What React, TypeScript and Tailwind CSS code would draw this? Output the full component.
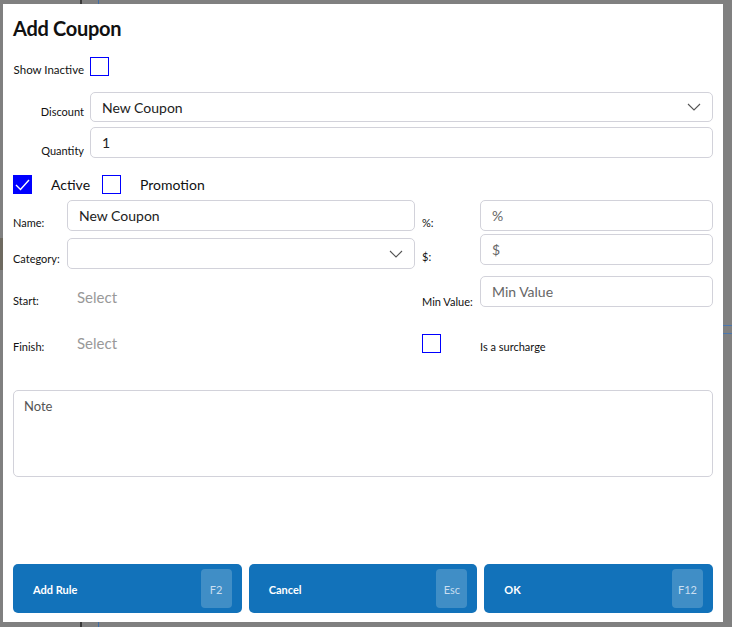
import { useState } from "react";

const font = { fontFamily: '"Lato", "Noto Sans", sans-serif' };

const Chevron = () => (
  <svg width="14" height="8" viewBox="0 0 14 8" className="shrink-0">
    <path d="M1 1l6 6 6-6" fill="none" stroke="#555" strokeWidth="1.1" />
  </svg>
);

const Check = ({ checked, onClick }: { checked: boolean; onClick?: () => void }) => (
  <div
    onClick={onClick}
    className={`w-[19px] h-[19px] shrink-0 border border-[#0000ff] flex items-center justify-center ${
      checked ? "bg-[#0000ff]" : "bg-white"
    }`}
  >
    {checked && (
      <svg width="17" height="17" viewBox="0 0 17 17">
        <path d="M2 9l4.5 4.5L15 4" fill="none" stroke="white" strokeWidth="1.4" />
      </svg>
    )}
  </div>
);

const Box = ({
  text,
  placeholder,
  select,
  className,
}: {
  text?: string;
  placeholder?: string;
  select?: boolean;
  className?: string;
}) => (
  <div
    className={`flex items-center justify-between border border-[#d2d2da] rounded-[5px] px-[11px] bg-white ${className}`}
  >
    <span className={`text-[14px] ${text ? "text-[#222]" : "text-[#666]"}`}>{text ?? placeholder}</span>
    {select && <Chevron />}
  </div>
);

const KeyButton = ({ label, hotkey }: { label: string; hotkey: string }) => (
  <button className="flex-1 h-[49px] rounded-[5px] bg-[#1272ba] flex items-center justify-between pl-[20px] pr-[10px]">
    <span className="text-white font-bold text-[11px] mt-[3px]">{label}</span>
    <span className="w-[31px] h-[39px] rounded-[4px] bg-[#408ec6] text-[#c9def0] text-[11px] flex items-center justify-center pt-[3px]">
      {hotkey}
    </span>
  </button>
);

export default function App() {
  const [showInactive, setShowInactive] = useState(false);
  const [active, setActive] = useState(true);
  const [promotion, setPromotion] = useState(false);
  const [surcharge, setSurcharge] = useState(false);

  return (
    <div className="relative w-[732px] h-[627px] bg-[#808080] pt-[4px] pl-[3px] overflow-hidden" style={font}>
      {/* bits of the page behind the overlay */}
      <div className="absolute left-[80px] top-0 w-[2px] h-full bg-[#3a3a3a]" />
      <div className="absolute left-[98px] top-0 w-[1px] h-full bg-[#3f6ea8]" />
      <div className="absolute left-0 top-[238px] w-[3px] h-[32px] bg-[#6e6a60]" />
      <div className="absolute left-[723px] top-[325px] w-[9px] h-[1px] bg-[#4a78b0]" />
      <div className="absolute left-[723px] top-[333px] w-[9px] h-[1px] bg-[#4a78b0]" />

      <div className="relative w-[720px] h-[618px] bg-white flex flex-col pl-[10px] pr-[10px] pt-[10px] pb-[9px] text-[#111]">
        <h1 className="text-[20px] leading-[28px] font-bold tracking-[-0.3px]">Add Coupon</h1>

        <div className="flex items-end gap-[6px] mt-[15px]">
          <span className="w-[71px] text-right text-[11.5px] leading-[14px] mb-[-1px] whitespace-nowrap">Show Inactive</span>
          <Check checked={showInactive} onClick={() => setShowInactive(!showInactive)} />
        </div>

        <div className="flex gap-[6px] mt-[16px]">
          <span className="w-[71px] text-right text-[11px] self-end mb-[2px]">Discount</span>
          <Box text="New Coupon" select className="flex-1 h-[30px]" />
        </div>

        <div className="flex gap-[6px] mt-[5px]">
          <span className="w-[71px] text-right text-[11px] self-end mb-[-1px]">Quantity</span>
          <Box text="1" className="flex-1 h-[31px]" />
        </div>

        <div className="flex items-center h-[19px] mt-[17px]">
          <Check checked={active} onClick={() => setActive(!active)} />
          <span className="ml-[19px] w-[51px] text-[14px] leading-[19px]">Active</span>
          <Check checked={promotion} onClick={() => setPromotion(!promotion)} />
          <span className="ml-[19px] text-[14px] leading-[19px]">Promotion</span>
        </div>

        <div className="flex mt-[6px]">
          <div className="w-[402px] flex flex-col">
            <div className="flex">
              <span className="w-[54px] text-[11px] self-end mb-[0px]">Name:</span>
              <Box text="New Coupon" className="flex-1 h-[31px]" />
            </div>
            <div className="flex mt-[7px]">
              <span className="w-[54px] text-[11px] self-end mb-[2px]">Category:</span>
              <Box select className="flex-1 h-[31px]" />
            </div>
            <div className="flex items-center h-[32px] mt-[16px]">
              <span className="w-[64px] text-[11px]">Start:</span>
              <span className="text-[15px] text-[#999] mb-[8px]">Select</span>
            </div>
            <div className="flex items-center h-[32px] mt-[14px]">
              <span className="w-[64px] text-[11px]">Finish:</span>
              <span className="text-[15px] text-[#999] mb-[7px]">Select</span>
            </div>
          </div>

          <div className="ml-[7px] flex-1 flex flex-col">
            <div className="flex">
              <span className="w-[58px] text-[11px] self-end mb-[0px]">%:</span>
              <Box placeholder="%" className="flex-1 h-[31px]" />
            </div>
            <div className="flex mt-[3px]">
              <span className="w-[58px] text-[11px] self-end mb-[0px]">$:</span>
              <Box placeholder="$" className="flex-1 h-[31px]" />
            </div>
            <div className="flex mt-[11px]">
              <span className="w-[58px] text-[11px] self-end mb-[-3px]">Min Value:</span>
              <Box placeholder="Min Value" className="flex-1 h-[31px]" />
            </div>
            <div className="flex items-center mt-[25px]">
              <div className="w-[58px]">
                <Check checked={surcharge} onClick={() => setSurcharge(!surcharge)} />
              </div>
              <span className="text-[11px] mt-[7px]">Is a surcharge</span>
            </div>
          </div>
        </div>

        <div className="mt-[27px] h-[87px] border border-[#d2d2da] rounded-[5px] px-[10px] pt-[2px]">
          <span className="text-[13px] text-[#555]">Note</span>
        </div>

        <div className="mt-auto flex gap-[7px]">
          <KeyButton label="Add Rule" hotkey="F2" />
          <KeyButton label="Cancel" hotkey="Esc" />
          <KeyButton label="OK" hotkey="F12" />
        </div>
      </div>
    </div>
  );
}
